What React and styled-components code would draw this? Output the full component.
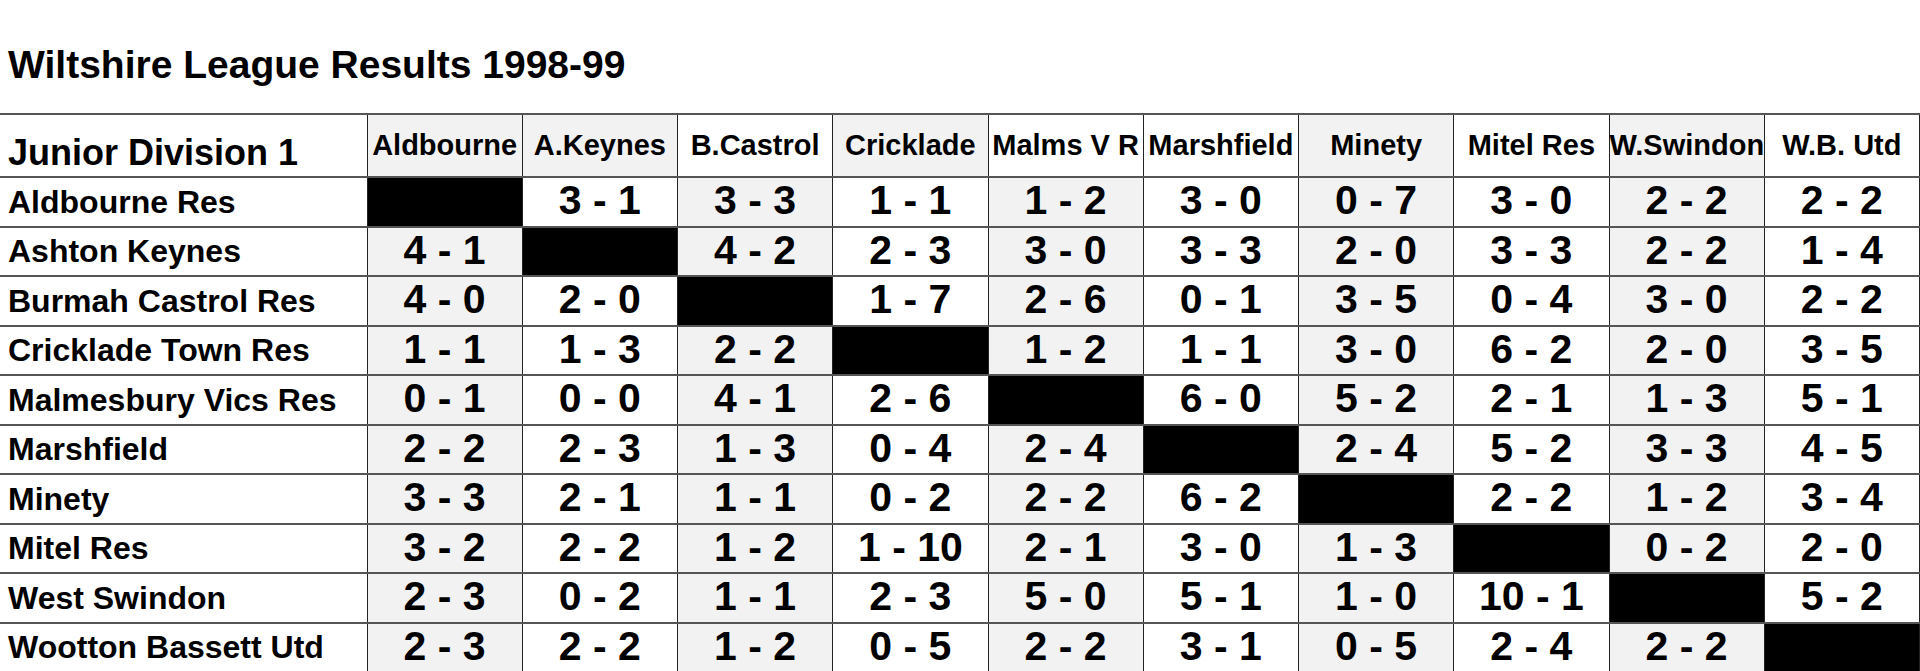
import React from 'react';
import styled, { createGlobalStyle } from 'styled-components';

const GlobalStyle = createGlobalStyle`
  body {
    margin: 0;
    background: #ffffff;
    font-family: 'Liberation Sans', Arial, sans-serif;
    color: #000;
  }
`;

const Page = styled.div`
  width: 1920px;
  overflow: hidden;
`;

const Heading = styled.h1`
  margin: 0;
  padding: 43px 0 26px 8px;
  font-size: 39px;
  line-height: 44px;
  font-weight: bold;
`;

const Table = styled.table`
  width: 1920px;
  border-collapse: collapse;
  table-layout: fixed;
  border-top: 2px solid #555;
`;

const HeadRow = styled.tr`
  height: 63px;
`;

const BodyRow = styled.tr`
  height: 49.5px;
`;

const Corner = styled.th`
  text-align: left;
  vertical-align: bottom;
  padding: 0 0 2px 8px;
  font-size: 36px;
  font-weight: bold;
  white-space: nowrap;
  border-bottom: 2px solid #555;
  border-right: 1px solid #222;
`;

const ColHead = styled.th`
  background: ${(p) => (p.$shade ? '#f2f2f2' : '#ffffff')};
  font-size: 29px;
  font-weight: bold;
  text-align: center;
  white-space: nowrap;
  padding: 0;
  overflow: visible;
  border-left: 1px solid #222;
  border-right: 1px solid #222;
  border-bottom: 2px solid #555;
`;

const TeamName = styled.th`
  text-align: left;
  padding: 0 0 0 8px;
  font-size: 32px;
  line-height: 40px;
  font-weight: bold;
  white-space: nowrap;
  border-bottom: 2px solid #555;
  border-right: 1px solid #222;
`;

const Score = styled.td`
  background: ${(p) => (p.$blank ? '#000' : p.$shade ? '#f2f2f2' : '#ffffff')};
  text-align: center;
  padding: 0 0 3px;
  font-size: 41px;
  line-height: 42px;
  font-weight: bold;
  white-space: nowrap;
  border-left: 1px solid #222;
  border-right: 1px solid #222;
  border-bottom: 2px solid #555;
`;

const teams = [
  'Aldbourne Res',
  'Ashton Keynes',
  'Burmah Castrol Res',
  'Cricklade Town Res',
  'Malmesbury Vics Res',
  'Marshfield',
  'Minety',
  'Mitel Res',
  'West Swindon',
  'Wootton Bassett Utd',
];

const shortNames = [
  'Aldbourne',
  'A.Keynes',
  'B.Castrol',
  'Cricklade',
  'Malms V R',
  'Marshfield',
  'Minety',
  'Mitel Res',
  'W.Swindon',
  'W.B. Utd',
];

// header shading doesn't follow the body columns exactly
const headShade = [true, true, false, true, false, false, true, false, true, false];

const results = [
  [null, '3 - 1', '3 - 3', '1 - 1', '1 - 2', '3 - 0', '0 - 7', '3 - 0', '2 - 2', '2 - 2'],
  ['4 - 1', null, '4 - 2', '2 - 3', '3 - 0', '3 - 3', '2 - 0', '3 - 3', '2 - 2', '1 - 4'],
  ['4 - 0', '2 - 0', null, '1 - 7', '2 - 6', '0 - 1', '3 - 5', '0 - 4', '3 - 0', '2 - 2'],
  ['1 - 1', '1 - 3', '2 - 2', null, '1 - 2', '1 - 1', '3 - 0', '6 - 2', '2 - 0', '3 - 5'],
  ['0 - 1', '0 - 0', '4 - 1', '2 - 6', null, '6 - 0', '5 - 2', '2 - 1', '1 - 3', '5 - 1'],
  ['2 - 2', '2 - 3', '1 - 3', '0 - 4', '2 - 4', null, '2 - 4', '5 - 2', '3 - 3', '4 - 5'],
  ['3 - 3', '2 - 1', '1 - 1', '0 - 2', '2 - 2', '6 - 2', null, '2 - 2', '1 - 2', '3 - 4'],
  ['3 - 2', '2 - 2', '1 - 2', '1 - 10', '2 - 1', '3 - 0', '1 - 3', null, '0 - 2', '2 - 0'],
  ['2 - 3', '0 - 2', '1 - 1', '2 - 3', '5 - 0', '5 - 1', '1 - 0', '10 - 1', null, '5 - 2'],
  ['2 - 3', '2 - 2', '1 - 2', '0 - 5', '2 - 2', '3 - 1', '0 - 5', '2 - 4', '2 - 2', null],
];

const App = () => (
  <>
    <GlobalStyle />
    <Page>
      <Heading>Wiltshire League Results 1998-99</Heading>
      <Table>
        <colgroup>
          <col style={{ width: 367 }} />
          {shortNames.map((n) => (
            <col key={n} />
          ))}
        </colgroup>
        <thead>
          <HeadRow>
            <Corner>Junior Division 1</Corner>
            {shortNames.map((n, i) => (
              <ColHead key={n} $shade={headShade[i]}>
                {n}
              </ColHead>
            ))}
          </HeadRow>
        </thead>
        <tbody>
          {teams.map((team, r) => (
            <BodyRow key={team}>
              <TeamName>{team}</TeamName>
              {results[r].map((s, c) => (
                <Score key={c} $blank={s === null} $shade={c % 2 === 0}>
                  {s}
                </Score>
              ))}
            </BodyRow>
          ))}
        </tbody>
      </Table>
    </Page>
  </>
);

export default App;
